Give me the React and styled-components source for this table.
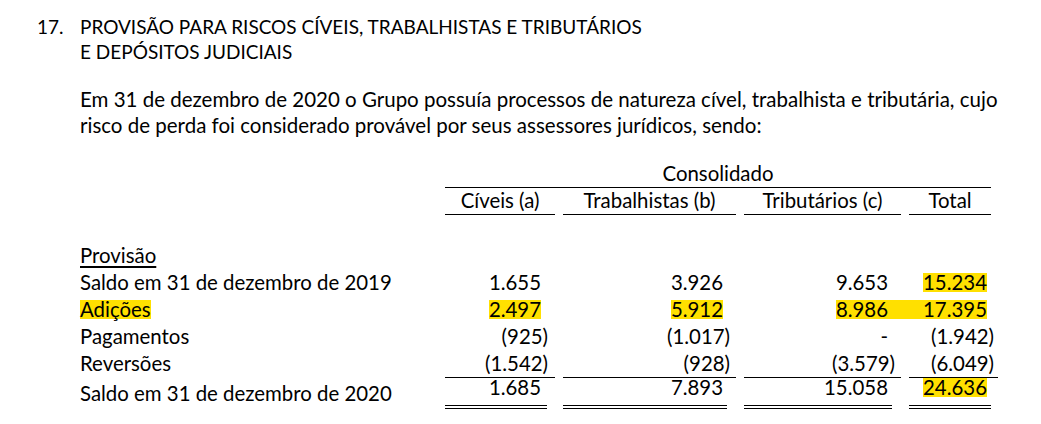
import React from 'react';
import styled, { createGlobalStyle } from 'styled-components';

const GlobalStyle = createGlobalStyle`
  body {
    margin: 0;
    background: #ffffff;
    color: #000000;
    font-family: Lato, "Open Sans", sans-serif;
  }
`;

const COLS = '357px 110px 173px 157px 82px';
const GAP = 8;
const PAD = [14, 13, 13, 4];
const INSET = [8, 9, 9, 0];

const Page = styled.div`
  width: 1041px;
  height: 424px;
  padding: 14px 0 0 37px;
  box-sizing: border-box;
  overflow: hidden;
`;

const Heading = styled.h1`
  display: flex;
  margin: 0;
  font-size: 19px;
  font-weight: 400;
  line-height: 25px;
`;

const HeadingNumber = styled.span`
  width: 43px;
  flex: none;
`;

const Body = styled.div`
  padding-left: 43px;
`;

const Paragraph = styled.p`
  margin: 22px 0 0;
  font-size: 20.5px;
  line-height: 26px;
`;

const Table = styled.div`
  margin-top: 22px;
  font-size: 20.4px;
`;

const Row = styled.div`
  display: grid;
  grid-template-columns: ${COLS};
  column-gap: ${GAP}px;
  height: ${(p) => p.$height || 27}px;
  line-height: 27px;
`;

const Label = styled.div`
  display: flex;
  align-items: ${(p) => (p.$top ? 'flex-start' : 'center')};
  white-space: nowrap;
  text-decoration: ${(p) => (p.$underline ? 'underline' : 'none')};
  text-underline-offset: 3px;
`;

const GroupTitle = styled.div`
  grid-column: 2 / 6;
  text-align: center;
  border-bottom: 1px solid #000;
`;

const HeadCell = styled.div`
  text-align: center;
  white-space: nowrap;
  border-bottom: 1px solid #000;
`;

const Num = styled.div`
  display: flex;
  align-items: center;
  justify-content: flex-end;
  padding-right: ${(p) => p.$pr}px;
  white-space: nowrap;
`;

const SumCell = styled.div`
  border-top: 1px solid #000;
  margin-right: ${(p) => -(p.$extend || 0)}px;
`;

const DoubleRule = styled(Num)`
  height: 31px;
  box-sizing: border-box;
  padding-bottom: 8px;
  line-height: 19px;
  border-bottom: 4px double #000;
  margin-right: ${(p) => p.$inset}px;
`;

const Close = styled.span`
  margin-right: -7px;
`;

const Mark = styled.span`
  display: block;
  flex: ${(p) => (p.$fill ? 1 : 'none')};
  text-align: right;
  background: #ffe000;
  line-height: 19px;
  margin-right: ${(p) => -(p.$spill || 0)}px;
  padding-right: ${(p) => p.$spill || 0}px;
`;

const rows = [
  { label: 'Saldo em 31 de dezembro de 2019', values: ['1.655', '3.926', '9.653', '15.234'], marks: [3] },
  { label: 'Adições', mark: true, values: ['2.497', '5.912', '8.986', '17.395'], marks: [0, 1, 2, 3], spill: 2, fill: 3 },
  { label: 'Pagamentos', values: ['(925)', '(1.017)', '-', '(1.942)'] },
  { label: 'Reversões', values: ['(1.542)', '(928)', '(3.579)', '(6.049)'] },
];

const totals = ['1.685', '7.893', '15.058', '24.636'];

function Value({ text }) {
  if (text.startsWith('(')) {
    return (
      <>
        <span>{text.slice(0, -1)}</span>
        <Close>)</Close>
      </>
    );
  }
  return <span>{text}</span>;
}

function Cell({ text, index, row }) {
  const marked = row.marks && row.marks.includes(index);
  return (
    <Num $pr={PAD[index]}>
      {marked ? (
        <Mark $fill={row.fill === index} $spill={row.spill === index ? PAD[index] + GAP : 0}>
          {text}
        </Mark>
      ) : (
        <Value text={text} />
      )}
    </Num>
  );
}

function App() {
  return (
    <Page>
      <GlobalStyle />
      <Heading>
        <HeadingNumber>17.</HeadingNumber>
        <span>
          PROVISÃO PARA RISCOS CÍVEIS, TRABALHISTAS E TRIBUTÁRIOS
          <br />
          E DEPÓSITOS JUDICIAIS
        </span>
      </Heading>
      <Body>
        <Paragraph>
          Em 31 de dezembro de 2020 o Grupo possuía processos de natureza cível, trabalhista e tributária, cujo
          <br />
          risco de perda foi considerado provável por seus assessores jurídicos, sendo:
        </Paragraph>
        <Table>
          <Row>
            <span />
            <GroupTitle>Consolidado</GroupTitle>
          </Row>
          <Row $height={28}>
            <span />
            <HeadCell>Cíveis (a)</HeadCell>
            <HeadCell>Trabalhistas (b)</HeadCell>
            <HeadCell>Tributários (c)</HeadCell>
            <HeadCell>Total</HeadCell>
          </Row>
          <Row />
          <Row>
            <Label $underline>Provisão</Label>
          </Row>
          {rows.map((row) => (
            <Row key={row.label}>
              <Label>{row.mark ? <Mark>{row.label}</Mark> : row.label}</Label>
              {row.values.map((v, i) => (
                <Cell key={i} text={v} index={i} row={row} />
              ))}
            </Row>
          ))}
          <Row $height={32}>
            <Label>Saldo em 31 de dezembro de 2020</Label>
            {totals.map((v, i) => {
              const extend = i === 3 ? 7 : 0;
              return (
                <SumCell key={i} $extend={extend}>
                  <DoubleRule $inset={INSET[i] + extend} $pr={PAD[i] - INSET[i]}>
                    {i === 3 ? <Mark>{v}</Mark> : <span>{v}</span>}
                  </DoubleRule>
                </SumCell>
              );
            })}
          </Row>
        </Table>
      </Body>
    </Page>
  );
}

export default App;
